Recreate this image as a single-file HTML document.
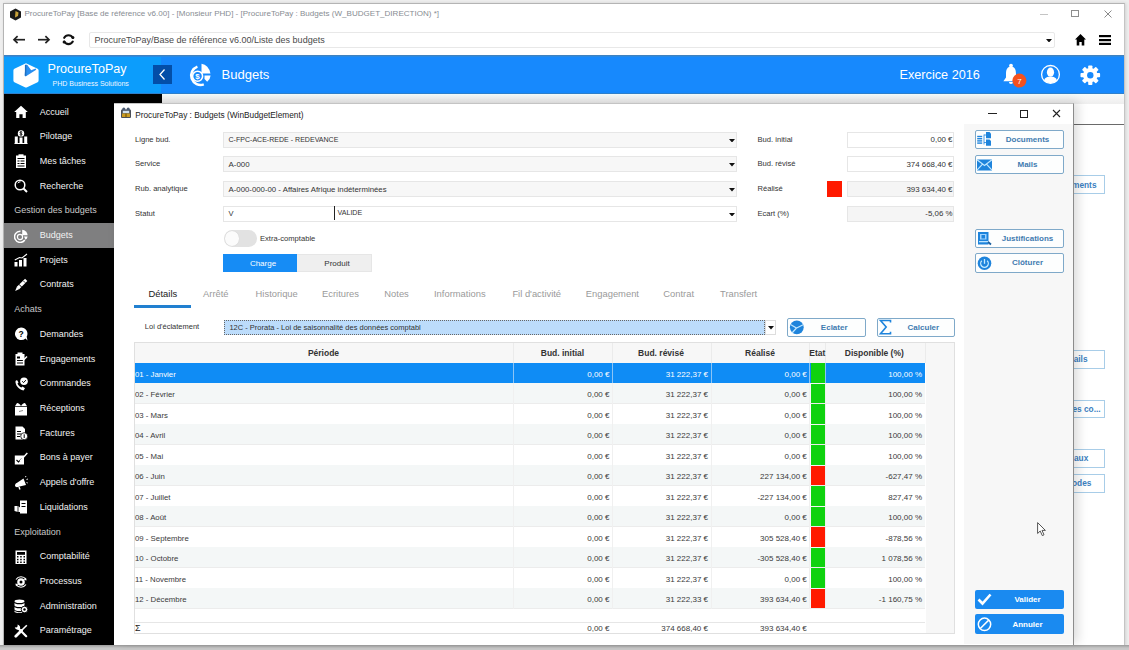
<!DOCTYPE html><html><head><meta charset="utf-8"><style>
html,body{margin:0;padding:0;}
body{width:1129px;height:650px;position:relative;overflow:hidden;background:#eeeeee;font-family:"Liberation Sans",sans-serif;}
div{box-sizing:border-box;}
</style></head><body>
<div style="position:absolute;left:3px;top:3px;width:1122px;height:643px;background:#fff;border:1px solid #b4b4b4;border-right-color:#c4c4c4;box-shadow:1px 0 3px rgba(0,0,0,0.12);"></div>
<div style="position:absolute;left:0px;top:645px;width:1129px;height:5px;background:linear-gradient(#9c9c9c,#c6c6c6 60%,#cacaca);"></div>
<svg style="position:absolute;left:9px;top:8px;" width="13" height="13" viewBox="0 0 13 13"><path d="M6.5 0.5 L12 3.5 L12 9.5 L6.5 12.5 L1 9.5 L1 3.5 Z" fill="#1a1a1a"/><path d="M6.5 3 L9.5 4.5 L9 8 L6 9.5 Z" fill="#c9a23a"/></svg>
<div style="position:absolute;left:24.5px;top:9.975px;font-size:8.05px;line-height:8.05px;color:#888d93;font-weight:normal;white-space:pre;">ProcureToPay [Base de référence v6.00] - [Monsieur PHD] - [ProcureToPay : Budgets (W_BUDGET_DIRECTION) *]</div>
<div style="position:absolute;left:1040px;top:13.5px;width:7.5px;height:1px;background:#c4c4c4;"></div>
<div style="position:absolute;left:1071px;top:10px;width:8px;height:7px;border:1px solid #8e8e8e;"></div>
<svg style="position:absolute;left:1103.5px;top:9.5px;" width="8" height="8" viewBox="0 0 8 8"><path d="M0.5 0.5 L7.5 7.5 M7.5 0.5 L0.5 7.5" stroke="#8a8a8a" stroke-width="1"/></svg>
<svg style="position:absolute;left:12px;top:34px;" width="14" height="12" viewBox="0 0 14 12"><path d="M2.2 5.7 H13" stroke="#222" stroke-width="1.7" fill="none"/><path d="M5.6 2.2 L2 5.7 L5.6 9.2" stroke="#222" stroke-width="1.7" fill="none"/></svg>
<svg style="position:absolute;left:37px;top:34px;" width="14" height="12" viewBox="0 0 14 12"><path d="M1 5.7 H11.8" stroke="#222" stroke-width="1.7" fill="none"/><path d="M8.4 2.2 L12 5.7 L8.4 9.2" stroke="#222" stroke-width="1.7" fill="none"/></svg>
<svg style="position:absolute;left:62px;top:33px;" width="13" height="13" viewBox="0 0 13 13"><path d="M2.2 4.8 A4.9 4.9 0 0 1 10.8 4.8" stroke="#111" stroke-width="2.1" fill="none" stroke-linecap="round"/><path d="M10.8 8.6 A4.9 4.9 0 0 1 2.2 8.6" stroke="#111" stroke-width="2.1" fill="none" stroke-linecap="round"/><circle cx="10.9" cy="4.4" r="1.5" fill="#111"/><circle cx="2.1" cy="9" r="1.5" fill="#111"/></svg>
<div style="position:absolute;left:88.5px;top:31.5px;width:966px;height:16px;border:1px solid #e8e8e8;border-radius:2px;background:#fff;"></div>
<div style="position:absolute;left:94.5px;top:35.5px;font-size:9px;line-height:9px;color:#4a4a4a;font-weight:normal;white-space:pre;">ProcureToPay/Base de référence v6.00/Liste des budgets</div>
<svg style="position:absolute;left:1045.5px;top:38.5px;" width="6" height="3.5" viewBox="0 0 6 3.5"><path d="M0 0 H6 L3 3.5 Z" fill="#111"/></svg>
<svg style="position:absolute;left:1075px;top:34px;" width="11" height="11.5" viewBox="0 0 11 11.5"><path d="M5.5 0 L11 5.5 L9.3 5.5 L9.3 11.5 L6.7 11.5 L6.7 8 L4.3 8 L4.3 11.5 L1.7 11.5 L1.7 5.5 L0 5.5 Z" fill="#000"/></svg>
<svg style="position:absolute;left:1099px;top:35px;" width="12" height="10" viewBox="0 0 12 10"><rect x="0" y="0" width="12" height="2.2" fill="#000"/><rect x="0" y="4" width="12" height="2.2" fill="#000"/><rect x="0" y="7.8" width="12" height="2.2" fill="#000"/></svg>
<div style="position:absolute;left:4px;top:55px;width:1120px;height:38.5px;background:#1789fd;"></div>
<div style="position:absolute;left:4px;top:55px;width:157px;height:38.5px;background:#0c9dfc;"></div>
<div style="position:absolute;left:4px;top:55px;width:1120px;height:1px;background:#3f82c0;"></div>
<div style="position:absolute;left:4px;top:56px;width:1120px;height:1px;background:#2b8ae2;"></div>
<div style="position:absolute;left:4px;top:92.5px;width:1120px;height:1px;background:#2f80cc;"></div>
<svg style="position:absolute;left:13px;top:62px;" width="27" height="26" viewBox="0 0 27 26"><path d="M13 1.2 L24.6 6.8 Q25.6 7.3 25.6 8.4 L25.6 18.6 Q25.6 19.7 24.6 20.2 L13.6 25.4 Q13 25.7 12.4 25.4 L1.4 20.2 Q0.4 19.7 0.4 18.6 L0.4 8.4 Q0.4 7.3 1.4 6.8 Z" fill="#fff"/><path d="M12.6 2.8 L14.2 2.8 L18.2 8.2 L22.6 6.6 L23.2 7.8 L12.6 14.6 L11.6 13.6 Z" fill="#2a8ff0"/><path d="M12.6 2.8 L12.6 13.8" stroke="#1f6fc0" stroke-width="1.4"/></svg>
<div style="position:absolute;left:47.5px;top:63.2px;font-size:12.6px;line-height:12.6px;color:#fff;font-weight:normal;white-space:pre;">ProcureToPay</div>
<div style="position:absolute;left:52.5px;top:80.475px;font-size:7.05px;line-height:7.05px;color:#f0f6ff;font-weight:normal;white-space:pre;">PHD Business Solutions</div>
<div style="position:absolute;left:153px;top:65px;width:19px;height:19px;background:#034ea8;"></div>
<svg style="position:absolute;left:153px;top:65px;" width="19" height="19" viewBox="0 0 19 19"><path d="M11.5 4.5 L7 9.5 L11.5 14.5" stroke="#fff" stroke-width="1.3" fill="none"/></svg>
<svg style="position:absolute;left:186px;top:62px;" width="27" height="27" viewBox="0 0 27 27"><path d="M11.4 4.6 A9.4 9.4 0 1 0 17.8 22.4" stroke="#fff" stroke-width="2.5" fill="none"/><circle cx="11.6" cy="14.2" r="5" stroke="#fff" stroke-width="1.6" fill="none"/><text x="11.6" y="17.3" font-size="8" font-weight="bold" fill="#fff" text-anchor="middle" font-family="Liberation Sans">$</text><path d="M15.5 1.8 Q22.5 3 24.5 11.5 L15.5 11.5 Z" fill="#fff"/><path d="M18.5 13.4 L24.6 13.4 Q24.2 17.5 21.2 19.8 L18.5 17 Z" fill="#fff"/></svg>
<div style="position:absolute;left:221.5px;top:68.475px;font-size:13.05px;line-height:13.05px;color:#fff;font-weight:normal;white-space:pre;">Budgets</div>
<div style="position:absolute;left:899.5px;top:68.65px;font-size:12.7px;line-height:12.7px;color:#fff;font-weight:normal;white-space:pre;">Exercice 2016</div>
<svg style="position:absolute;left:1000px;top:62px;" width="30" height="28" viewBox="0 0 30 28"><circle cx="11" cy="3.6" r="1.9" fill="#fff"/><path d="M11 4.5 C6.8 4.5 6 8.5 6 12 L6 15.5 L3.4 19.2 L18.6 19.2 L16 15.5 L16 12 C16 8.5 15.2 4.5 11 4.5 Z" fill="#fff"/><path d="M9 20 A2 2 0 0 0 13 20 Z" fill="#fff"/><circle cx="19.4" cy="18.6" r="7" fill="#f4511e"/><text x="19.6" y="21.6" font-size="8" fill="#fff" text-anchor="middle" font-family="Liberation Sans">7</text></svg>
<svg style="position:absolute;left:1040px;top:64px;" width="22" height="22" viewBox="0 0 22 22"><circle cx="10.5" cy="10.4" r="8.9" stroke="#fff" stroke-width="1.3" fill="none"/><ellipse cx="10.5" cy="8.2" rx="3.6" ry="4.6" fill="#fff"/><path d="M4.2 16.8 C4.6 13.2 7.5 12.8 10.5 12.8 C13.5 12.8 16.4 13.2 16.8 16.8 Q10.5 21.5 4.2 16.8 Z" fill="#fff"/></svg>
<svg style="position:absolute;left:1079px;top:63.5px;" width="22" height="22" viewBox="0 0 22 22"><circle cx="11.3" cy="11.2" r="7.3" fill="#fff"/><rect x="9.2" y="1.4" width="4.2" height="4" rx="0.8" fill="#fff" transform="rotate(0 11.3 11.2)"/><rect x="9.2" y="1.4" width="4.2" height="4" rx="0.8" fill="#fff" transform="rotate(45 11.3 11.2)"/><rect x="9.2" y="1.4" width="4.2" height="4" rx="0.8" fill="#fff" transform="rotate(90 11.3 11.2)"/><rect x="9.2" y="1.4" width="4.2" height="4" rx="0.8" fill="#fff" transform="rotate(135 11.3 11.2)"/><rect x="9.2" y="1.4" width="4.2" height="4" rx="0.8" fill="#fff" transform="rotate(180 11.3 11.2)"/><rect x="9.2" y="1.4" width="4.2" height="4" rx="0.8" fill="#fff" transform="rotate(225 11.3 11.2)"/><rect x="9.2" y="1.4" width="4.2" height="4" rx="0.8" fill="#fff" transform="rotate(270 11.3 11.2)"/><rect x="9.2" y="1.4" width="4.2" height="4" rx="0.8" fill="#fff" transform="rotate(315 11.3 11.2)"/><circle cx="11.3" cy="11.2" r="3.2" fill="#1789fd"/></svg>
<div style="position:absolute;left:162px;top:93.5px;width:962px;height:551px;background:#fff;"></div>
<div style="position:absolute;left:162px;top:93.5px;width:962px;height:10px;background:linear-gradient(#f4fcfc,#f5f5f5 40%,#eeeeee);"></div>
<div style="position:absolute;left:1073px;top:124px;width:51px;height:1.2px;background:#6a6a6a;"></div>
<div style="position:absolute;left:1060px;top:175px;width:45px;height:19px;border:1px solid #a8cde8;background:#fff;"></div>
<div style="position:absolute;left:696.5px;width:400px;text-align:right;top:180.85px;font-size:8.3px;line-height:8.3px;color:#3b80c0;font-weight:bold;white-space:pre;">ments</div>
<div style="position:absolute;left:1060px;top:349.5px;width:45px;height:19.0px;border:1px solid #a8cde8;background:#fff;"></div>
<div style="position:absolute;left:687.5px;width:400px;text-align:right;top:355.35px;font-size:8.3px;line-height:8.3px;color:#3b80c0;font-weight:bold;white-space:pre;">ails</div>
<div style="position:absolute;left:1060px;top:399.5px;width:45px;height:18.5px;border:1px solid #a8cde8;background:#fff;"></div>
<div style="position:absolute;left:700.5999999999999px;width:400px;text-align:right;top:405.1px;font-size:8.3px;line-height:8.3px;color:#3b80c0;font-weight:bold;white-space:pre;">es co...</div>
<div style="position:absolute;left:1060px;top:448.5px;width:45px;height:19.0px;border:1px solid #a8cde8;background:#fff;"></div>
<div style="position:absolute;left:688.3px;width:400px;text-align:right;top:454.35px;font-size:8.3px;line-height:8.3px;color:#3b80c0;font-weight:bold;white-space:pre;">aux</div>
<div style="position:absolute;left:1060px;top:473.5px;width:45px;height:19.0px;border:1px solid #a8cde8;background:#fff;"></div>
<div style="position:absolute;left:691.4000000000001px;width:400px;text-align:right;top:479.35px;font-size:8.3px;line-height:8.3px;color:#3b80c0;font-weight:bold;white-space:pre;">odes</div>
<div style="position:absolute;left:4px;top:93.5px;width:158px;height:551px;background:#000;"></div>
<div style="position:absolute;left:4px;top:222.5px;width:158px;height:25.2px;background:#7f7f80;"></div>
<div style="position:absolute;left:39.7px;top:107.5px;font-size:9px;line-height:9px;color:#f2f2f2;font-weight:normal;white-space:pre;">Accueil</div>
<svg style="position:absolute;left:14px;top:105.0px;" width="14" height="14" viewBox="0 0 14 14"><path d="M7 0.8 L13.8 7 L11.8 7 L11.8 13 L8.6 13 L8.6 9.2 L5.4 9.2 L5.4 13 L2.2 13 L2.2 7 L0.2 7 Z" fill="#fff"/></svg>
<div style="position:absolute;left:39.7px;top:132.21px;font-size:9px;line-height:9px;color:#f2f2f2;font-weight:normal;white-space:pre;">Pilotage</div>
<svg style="position:absolute;left:14px;top:129.7px;" width="14" height="14" viewBox="0 0 14 14"><circle cx="7" cy="3.4" r="3.2" fill="#fff"/><path d="M8.3 2.2 Q7 1.3 6 2 Q5.3 2.8 7 3.4 Q8.7 4 8 4.8 Q7 5.5 5.7 4.6 M7 1.2 V5.7" stroke="#000" stroke-width="0.8" fill="none"/><rect x="0.8" y="6.5" width="3" height="7" fill="#fff"/><rect x="5.5" y="7.5" width="3" height="6" fill="#fff"/><rect x="10.2" y="6.5" width="3" height="7" fill="#fff"/><rect x="0.5" y="13" width="13" height="1" fill="#fff"/></svg>
<div style="position:absolute;left:39.7px;top:156.92000000000002px;font-size:9px;line-height:9px;color:#f2f2f2;font-weight:normal;white-space:pre;">Mes tâches</div>
<svg style="position:absolute;left:14px;top:154.4px;" width="14" height="14" viewBox="0 0 14 14"><rect x="2" y="1.5" width="10" height="12.5" fill="#fff"/><rect x="4.5" y="0.3" width="5" height="2.2" fill="#fff"/><rect x="3.5" y="4" width="7" height="1" fill="#000"/><rect x="3.5" y="6.5" width="2" height="1" fill="#000"/><rect x="6.5" y="6.5" width="4" height="1" fill="#000"/><rect x="3.5" y="9" width="2" height="1" fill="#000"/><rect x="6.5" y="9" width="4" height="1" fill="#000"/><rect x="3.5" y="11.5" width="7" height="1" fill="#000"/></svg>
<div style="position:absolute;left:39.7px;top:181.63px;font-size:9px;line-height:9px;color:#f2f2f2;font-weight:normal;white-space:pre;">Recherche</div>
<svg style="position:absolute;left:14px;top:179.1px;" width="14" height="14" viewBox="0 0 14 14"><circle cx="6" cy="6" r="4.8" stroke="#fff" stroke-width="1.5" fill="none"/><path d="M9.5 9.5 L13 13" stroke="#fff" stroke-width="2"/><path d="M3.8 4.2 A3 3 0 0 1 6.5 2.8" stroke="#fff" stroke-width="1" fill="none"/></svg>
<div style="position:absolute;left:14.3px;top:206.34px;font-size:9px;line-height:9px;color:#c8c8c8;font-weight:normal;white-space:pre;">Gestion des budgets</div>
<div style="position:absolute;left:39.7px;top:231.05px;font-size:9px;line-height:9px;color:#f2f2f2;font-weight:normal;white-space:pre;">Budgets</div>
<svg style="position:absolute;left:14px;top:228.6px;" width="14" height="14" viewBox="0 0 14 14"><path d="M6.5 2.2 A5.6 5.6 0 1 0 10.8 11" stroke="#fff" stroke-width="1.5" fill="none"/><circle cx="6" cy="8" r="2.6" stroke="#fff" stroke-width="1.2" fill="none"/><path d="M8.2 0.8 A5.6 5.6 0 0 1 13.6 6.2 L8.2 6.2 Z" fill="#fff"/><path d="M10 7.4 L13.6 7.4 A5 5 0 0 1 11.5 10.8 Z" fill="#fff"/></svg>
<div style="position:absolute;left:39.7px;top:255.76px;font-size:9px;line-height:9px;color:#f2f2f2;font-weight:normal;white-space:pre;">Projets</div>
<svg style="position:absolute;left:14px;top:253.3px;" width="14" height="14" viewBox="0 0 14 14"><rect x="0.5" y="9" width="3" height="4.5" fill="#fff"/><rect x="5" y="7" width="3" height="6.5" fill="#fff"/><rect x="9.5" y="5" width="3" height="8.5" fill="#fff"/><path d="M0.8 7 L5.5 4.5 L8 5 L13 1" stroke="#fff" stroke-width="1.1" fill="none"/></svg>
<div style="position:absolute;left:39.7px;top:280.47px;font-size:9px;line-height:9px;color:#f2f2f2;font-weight:normal;white-space:pre;">Contrats</div>
<svg style="position:absolute;left:14px;top:278.0px;" width="14" height="14" viewBox="0 0 14 14"><path d="M4 10 L12.2 1.8" stroke="#fff" stroke-width="3.2"/><path d="M4.8 6.2 L7.8 9.2" stroke="#000" stroke-width="1"/><path d="M3 8.6 L5.4 11 L1.2 13 Z" fill="#fff"/><path d="M9.5 3 L11.2 4.7" stroke="#000" stroke-width="0.8"/></svg>
<div style="position:absolute;left:14.3px;top:305.18px;font-size:9px;line-height:9px;color:#c8c8c8;font-weight:normal;white-space:pre;">Achats</div>
<div style="position:absolute;left:39.7px;top:329.89px;font-size:9px;line-height:9px;color:#f2f2f2;font-weight:normal;white-space:pre;">Demandes</div>
<svg style="position:absolute;left:14px;top:327.4px;" width="14" height="14" viewBox="0 0 14 14"><path d="M7 0.5 A6.3 6.3 0 1 0 11.5 11.5 L13.5 13.5 L12.7 9.8 A6.3 6.3 0 0 0 7 0.5 Z" fill="#fff"/><text x="7" y="10.3" font-size="8.5" font-weight="bold" fill="#000" text-anchor="middle" font-family="Liberation Sans">?</text></svg>
<div style="position:absolute;left:39.7px;top:354.6px;font-size:9px;line-height:9px;color:#f2f2f2;font-weight:normal;white-space:pre;">Engagements</div>
<svg style="position:absolute;left:14px;top:352.1px;" width="14" height="14" viewBox="0 0 14 14"><rect x="1.5" y="2" width="9" height="11.5" fill="#fff"/><rect x="3.5" y="0.5" width="5" height="2.5" fill="#fff"/><rect x="3" y="4.5" width="3" height="2" fill="#000"/><rect x="3" y="8" width="6" height="1" fill="#000"/><rect x="3" y="10.5" width="6" height="1" fill="#000"/><path d="M9.5 9 L13.5 5 L12.5 4 L8.5 8 Z" fill="#fff"/></svg>
<div style="position:absolute;left:39.7px;top:379.31px;font-size:9px;line-height:9px;color:#f2f2f2;font-weight:normal;white-space:pre;">Commandes</div>
<svg style="position:absolute;left:14px;top:376.8px;" width="14" height="14" viewBox="0 0 14 14"><path d="M1.5 4 C1 8 5 13 9.5 13.5 L11 11.2 L8.5 9.5 L7.5 10.5 C6 10 4 8 3.5 6.5 L4.5 5.5 L3 3 Z" fill="#fff"/><circle cx="10" cy="4.2" r="3.8" fill="#fff"/><path d="M8.2 4.3 L9.6 5.6 L11.8 3.2" stroke="#000" stroke-width="1" fill="none"/></svg>
<div style="position:absolute;left:39.7px;top:404.02px;font-size:9px;line-height:9px;color:#f2f2f2;font-weight:normal;white-space:pre;">Réceptions</div>
<svg style="position:absolute;left:14px;top:401.5px;" width="14" height="14" viewBox="0 0 14 14"><rect x="1" y="5" width="12" height="8.5" fill="#fff"/><path d="M3 1 C4.5 1 6.5 2.5 7 4.3 L1 4.3 Z" fill="#fff"/><path d="M11 1 C9.5 1 7.5 2.5 7 4.3 L13 4.3 Z" fill="#fff"/><path d="M5 9.5 L9 8.5" stroke="#888" stroke-width="1"/></svg>
<div style="position:absolute;left:39.7px;top:428.73px;font-size:9px;line-height:9px;color:#f2f2f2;font-weight:normal;white-space:pre;">Factures</div>
<svg style="position:absolute;left:14px;top:426.2px;" width="14" height="14" viewBox="0 0 14 14"><path d="M1.5 0.5 L8.5 0.5 L11 3 L11 13.5 L1.5 13.5 Z" fill="#fff"/><rect x="3" y="5" width="4" height="1" fill="#000"/><rect x="3" y="7.5" width="4" height="1" fill="#000"/><rect x="3" y="10" width="3" height="1" fill="#000"/><circle cx="10.2" cy="10.2" r="3.5" fill="#fff" stroke="#000" stroke-width="0.8"/><path d="M10.2 8.3 L10.2 12" stroke="#000" stroke-width="1"/></svg>
<div style="position:absolute;left:39.7px;top:453.44px;font-size:9px;line-height:9px;color:#f2f2f2;font-weight:normal;white-space:pre;">Bons à payer</div>
<svg style="position:absolute;left:14px;top:450.9px;" width="14" height="14" viewBox="0 0 14 14"><rect x="0.8" y="4.5" width="9.2" height="9" fill="#fff"/><path d="M2.5 9 L4.5 11 L8 7.5" stroke="#000" stroke-width="1.1" fill="none"/><path d="M6 9 L12.8 1.5 L13.8 2.5 L7 10 L5.5 10.5 Z" fill="#fff"/></svg>
<div style="position:absolute;left:39.7px;top:478.15000000000003px;font-size:9px;line-height:9px;color:#f2f2f2;font-weight:normal;white-space:pre;">Appels d'offre</div>
<svg style="position:absolute;left:14px;top:475.7px;" width="14" height="14" viewBox="0 0 14 14"><path d="M2 7.5 L9.5 2.5 L12 9 L3.5 11 Z" fill="#fff"/><circle cx="3" cy="9.2" r="2" fill="#fff"/><path d="M5 11 L6 13.5" stroke="#fff" stroke-width="1.4"/><path d="M11 1 L12.5 0 M12.5 3.5 L14 3 M12.5 6.5 L13.8 7" stroke="#fff" stroke-width="0.9"/></svg>
<div style="position:absolute;left:39.7px;top:502.86px;font-size:9px;line-height:9px;color:#f2f2f2;font-weight:normal;white-space:pre;">Liquidations</div>
<svg style="position:absolute;left:14px;top:500.4px;" width="14" height="14" viewBox="0 0 14 14"><rect x="6" y="0.5" width="7" height="13" fill="#fff"/><rect x="7.5" y="3" width="4" height="1" fill="#000"/><rect x="7.5" y="6" width="4" height="1" fill="#000"/><path d="M0.5 6 L4 6 L7.5 8.5 L7.5 12 L4 12 L0.5 11 Z" fill="#fff"/><path d="M4 6 L4 12" stroke="#000" stroke-width="0.8"/></svg>
<div style="position:absolute;left:14.3px;top:527.5699999999999px;font-size:9px;line-height:9px;color:#c8c8c8;font-weight:normal;white-space:pre;">Exploitation</div>
<div style="position:absolute;left:39.7px;top:552.28px;font-size:9px;line-height:9px;color:#f2f2f2;font-weight:normal;white-space:pre;">Comptabilité</div>
<svg style="position:absolute;left:14px;top:549.8px;" width="14" height="14" viewBox="0 0 14 14"><rect x="1.5" y="0.5" width="11" height="13.5" fill="#fff"/><rect x="3" y="2" width="8" height="2.8" fill="#000"/><g fill="#000"><rect x="3" y="6" width="1.5" height="1.5"/><rect x="6.2" y="6" width="1.5" height="1.5"/><rect x="9.5" y="6" width="1.5" height="1.5"/><rect x="3" y="8.8" width="1.5" height="1.5"/><rect x="6.2" y="8.8" width="1.5" height="1.5"/><rect x="9.5" y="8.8" width="1.5" height="1.5"/><rect x="3" y="11.5" width="1.5" height="1.5"/><rect x="6.2" y="11.5" width="1.5" height="1.5"/><rect x="9.5" y="11.5" width="1.5" height="1.5"/></g></svg>
<div style="position:absolute;left:39.7px;top:576.99px;font-size:9px;line-height:9px;color:#f2f2f2;font-weight:normal;white-space:pre;">Processus</div>
<svg style="position:absolute;left:14px;top:574.5px;" width="14" height="14" viewBox="0 0 14 14"><path d="M2 4.5 A6 6 0 0 1 12 4.5" stroke="#fff" stroke-width="1.1" fill="none"/><path d="M12 9.5 A6 6 0 0 1 2 9.5" stroke="#fff" stroke-width="1.1" fill="none"/><circle cx="7" cy="7" r="3.8" fill="#fff"/><circle cx="7" cy="7" r="1.5" fill="#000"/><path d="M12 2.5 L12.5 5.5 L9.8 4.8 Z M2 11.5 L1.5 8.5 L4.2 9.2 Z" fill="#fff"/></svg>
<div style="position:absolute;left:39.7px;top:601.7px;font-size:9px;line-height:9px;color:#f2f2f2;font-weight:normal;white-space:pre;">Administration</div>
<svg style="position:absolute;left:14px;top:599.2px;" width="14" height="14" viewBox="0 0 14 14"><ellipse cx="5.5" cy="2.2" rx="5" ry="1.8" fill="#fff"/><path d="M0.5 3.5 A5 1.8 0 0 0 10.5 3.5 L10.5 6.2 A5 1.8 0 0 1 0.5 6.2 Z" fill="#fff"/><path d="M0.5 7.5 A5 1.8 0 0 0 10.5 7.5 L10.5 10.2 A5 1.8 0 0 1 0.5 10.2 Z" fill="#fff"/><path d="M0.5 11.5 A5 1.8 0 0 0 8 12.9 L8 13.8 A5 1.8 0 0 1 0.5 13 Z" fill="#fff"/><circle cx="10.5" cy="10.5" r="3.3" fill="#fff" stroke="#000" stroke-width="0.9"/><circle cx="10.5" cy="10.5" r="1.2" fill="#000"/></svg>
<div style="position:absolute;left:39.7px;top:626.41px;font-size:9px;line-height:9px;color:#f2f2f2;font-weight:normal;white-space:pre;">Paramétrage</div>
<svg style="position:absolute;left:14px;top:623.9px;" width="14" height="14" viewBox="0 0 14 14"><path d="M4 4 L12.2 12.2" stroke="#fff" stroke-width="2.2" stroke-linecap="round"/><path d="M0.8 3.2 A3.3 3.3 0 0 0 5.8 5.2 A3.3 3.3 0 0 0 3.6 0.5 L3.6 2.6 L2.4 3.6 Z" fill="#fff"/><path d="M12.8 1.2 L7 7" stroke="#fff" stroke-width="1.6"/><path d="M7.5 6.5 L1.8 12.2" stroke="#fff" stroke-width="2.8" stroke-linecap="round"/></svg>
<div style="position:absolute;left:114px;top:103px;width:960px;height:542px;background:#fff;border-top:1px solid #c4c4c4;border-right:1px solid #8c8c8c;box-shadow:4px -2px 10px rgba(0,0,0,0.14);"></div>
<svg style="position:absolute;left:119.5px;top:107px;" width="12" height="12" viewBox="0 0 12 12"><path d="M1 3.5 Q1 2.5 2 2.5 L10 2.5 Q11 2.5 11 3.5 L11 10 Q11 11 10 11 L2 11 Q1 11 1 10 Z" fill="#4a4f58"/><circle cx="3.8" cy="2.2" r="1.6" fill="#4a5a72"/><circle cx="8.2" cy="2.2" r="1.6" fill="#4a5a72"/><rect x="2.8" y="3.8" width="6.4" height="2.4" fill="#cfe0f0"/><path d="M2 6.5 L10 6.5 L10 10 L2 10 Z" fill="#c99a22"/><rect x="5.2" y="6.5" width="1.6" height="3.5" fill="#8a6a10"/></svg>
<div style="position:absolute;left:135.2px;top:110.64999999999999px;font-size:8.3px;line-height:8.3px;color:#222;font-weight:normal;white-space:pre;">ProcureToPay : Budgets (WinBudgetElement)</div>
<div style="position:absolute;left:988px;top:113px;width:8.5px;height:1.2px;background:#222;"></div>
<div style="position:absolute;left:1019.7px;top:110px;width:8.5px;height:7.5px;border:1px solid #222;border-bottom-width:1.5px;"></div>
<svg style="position:absolute;left:1052px;top:109px;" width="9" height="9" viewBox="0 0 9 9"><path d="M1 1 L8 8 M8 1 L1 8" stroke="#222" stroke-width="1.1"/></svg>
<div style="position:absolute;left:964px;top:124px;width:109px;height:520px;background:#f7f7f7;"></div>
<div style="position:absolute;left:974.5px;top:129.5px;width:89px;height:19.5px;background:#fdfefe;border:1px solid #7fa9c9;border-radius:2px;"></div>
<div style="position:absolute;left:827.5px;width:400px;text-align:center;top:135.75px;font-size:8px;line-height:8px;color:#3f7bb0;font-weight:bold;white-space:pre;">Documents</div>
<svg style="position:absolute;left:976px;top:131.0px;" width="18" height="16" viewBox="0 0 18 16"><g fill="#1e84dc"><rect x="1.2" y="4.8" width="5" height="1.4"/><rect x="1.2" y="7" width="5" height="1.4"/><rect x="1.2" y="9.2" width="5" height="1.4"/><rect x="1.2" y="11.4" width="5" height="1.4"/><path d="M10 1 L13.5 1 L15 2.5 L15 7.3 L10 7.3 Z"/><path d="M10 8.5 L13.5 8.5 L15 10 L15 14.8 L10 14.8 Z"/></g><path d="M8 3.5 L8 13.5 M8 4 L10 4 M8 11.5 L10 11.5" stroke="#1e84dc" stroke-width="0.8" fill="none"/></svg>
<div style="position:absolute;left:974.5px;top:154.5px;width:89px;height:19.5px;background:#fdfefe;border:1px solid #7fa9c9;border-radius:2px;"></div>
<div style="position:absolute;left:827.5px;width:400px;text-align:center;top:160.75px;font-size:8px;line-height:8px;color:#3f7bb0;font-weight:bold;white-space:pre;">Mails</div>
<svg style="position:absolute;left:976px;top:156.0px;" width="18" height="16" viewBox="0 0 18 16"><rect x="1" y="3.5" width="15" height="11" fill="#1e84dc"/><path d="M1 3.8 L8.5 9.5 L16 3.8 M1 14.2 L6.3 8.3 M16 14.2 L10.7 8.3" stroke="#bfe6ff" stroke-width="1.2" fill="none"/></svg>
<div style="position:absolute;left:974.5px;top:228.5px;width:89px;height:19.5px;background:#fdfefe;border:1px solid #7fa9c9;border-radius:2px;"></div>
<div style="position:absolute;left:827.5px;width:400px;text-align:center;top:234.75px;font-size:8px;line-height:8px;color:#3f7bb0;font-weight:bold;white-space:pre;">Justifications</div>
<svg style="position:absolute;left:976px;top:230.0px;" width="18" height="16" viewBox="0 0 18 16"><rect x="2" y="2" width="10.5" height="12.5" fill="#1e84dc"/><rect x="4" y="4" width="6.5" height="5.5" fill="#9fd3ff"/><rect x="5.5" y="5" width="3.5" height="3.5" fill="#1e84dc"/><rect x="3" y="11" width="9" height="1.3" fill="#bfe6ff"/><path d="M12 12 L15 14.5" stroke="#1a5fa0" stroke-width="1.8"/></svg>
<div style="position:absolute;left:974.5px;top:253px;width:89px;height:19.5px;background:#fdfefe;border:1px solid #7fa9c9;border-radius:2px;"></div>
<div style="position:absolute;left:827.5px;width:400px;text-align:center;top:259.25px;font-size:8px;line-height:8px;color:#3f7bb0;font-weight:bold;white-space:pre;">Clôturer</div>
<svg style="position:absolute;left:976px;top:254.5px;" width="18" height="16" viewBox="0 0 18 16"><circle cx="8.5" cy="8.3" r="6.8" fill="#1e84dc"/><path d="M5.8 5.8 A3.8 3.8 0 1 0 11.2 5.8" stroke="#c8ecff" stroke-width="1.3" fill="none"/><path d="M8.5 4 L8.5 8.8" stroke="#c8ecff" stroke-width="1.3"/></svg>
<div style="position:absolute;left:974.5px;top:589.5px;width:89px;height:19.0px;background:#1a8af0;border-radius:2px;"></div>
<div style="position:absolute;left:827.5px;width:400px;text-align:center;top:596.0px;font-size:8px;line-height:8px;color:#fff;font-weight:bold;white-space:pre;">Valider</div>
<svg style="position:absolute;left:976px;top:591.0px;" width="18" height="16" viewBox="0 0 18 16"><path d="M2.5 8.5 L6.5 12.5 L14.5 3.5" stroke="#fff" stroke-width="2.6" fill="none"/></svg>
<div style="position:absolute;left:974.5px;top:614px;width:89px;height:19.5px;background:#1a8af0;border-radius:2px;"></div>
<div style="position:absolute;left:827.5px;width:400px;text-align:center;top:620.75px;font-size:8px;line-height:8px;color:#fff;font-weight:bold;white-space:pre;">Annuler</div>
<svg style="position:absolute;left:976px;top:615.5px;" width="18" height="16" viewBox="0 0 18 16"><circle cx="8.5" cy="8.3" r="6.2" stroke="#fff" stroke-width="1.5" fill="none"/><path d="M4.3 12.5 L12.7 4.1" stroke="#fff" stroke-width="1.5"/></svg>
<div style="position:absolute;left:135px;top:135.7px;font-size:7.6px;line-height:7.6px;color:#333;font-weight:normal;white-space:pre;">Ligne bud.</div>
<div style="position:absolute;left:223px;top:131.5px;width:514px;height:16px;background:#f7f7f7;border:1px solid #e6e6e6;"></div>
<div style="position:absolute;left:228.5px;top:136.475px;font-size:7.05px;line-height:7.05px;color:#333;font-weight:normal;white-space:pre;">C-FPC-ACE-REDE - REDEVANCE</div>
<svg style="position:absolute;left:729px;top:138.5px;" width="6" height="3.5" viewBox="0 0 6 3.5"><path d="M0 0 H6 L3 3.5 Z" fill="#111"/></svg>
<div style="position:absolute;left:135px;top:160.2px;font-size:7.6px;line-height:7.6px;color:#333;font-weight:normal;white-space:pre;">Service</div>
<div style="position:absolute;left:223px;top:156px;width:514px;height:16px;background:#f7f7f7;border:1px solid #e6e6e6;"></div>
<div style="position:absolute;left:228.5px;top:160.55px;font-size:7.9px;line-height:7.9px;color:#333;font-weight:normal;white-space:pre;">A-000</div>
<svg style="position:absolute;left:729px;top:163px;" width="6" height="3.5" viewBox="0 0 6 3.5"><path d="M0 0 H6 L3 3.5 Z" fill="#111"/></svg>
<div style="position:absolute;left:135px;top:185.2px;font-size:7.6px;line-height:7.6px;color:#333;font-weight:normal;white-space:pre;">Rub. analytique</div>
<div style="position:absolute;left:223px;top:181px;width:514px;height:16px;background:#f7f7f7;border:1px solid #e6e6e6;"></div>
<div style="position:absolute;left:228.5px;top:185.6px;font-size:7.8px;line-height:7.8px;color:#333;font-weight:normal;white-space:pre;">A-000-000-00 - Affaires Afrique indéterminées</div>
<svg style="position:absolute;left:729px;top:188px;" width="6" height="3.5" viewBox="0 0 6 3.5"><path d="M0 0 H6 L3 3.5 Z" fill="#111"/></svg>
<div style="position:absolute;left:135px;top:209.7px;font-size:7.6px;line-height:7.6px;color:#333;font-weight:normal;white-space:pre;">Statut</div>
<div style="position:absolute;left:223px;top:205.5px;width:514px;height:16px;background:#fff;border:1px solid #e6e6e6;"></div>
<div style="position:absolute;left:228.5px;top:210.25px;font-size:7.5px;line-height:7.5px;color:#333;font-weight:normal;white-space:pre;">V</div>
<svg style="position:absolute;left:729px;top:212.5px;" width="6" height="3.5" viewBox="0 0 6 3.5"><path d="M0 0 H6 L3 3.5 Z" fill="#111"/></svg>
<div style="position:absolute;left:334px;top:206px;width:1px;height:14px;background:#222;"></div>
<div style="position:absolute;left:337.5px;top:210.45px;font-size:7.1px;line-height:7.1px;color:#333;font-weight:normal;white-space:pre;">VALIDE</div>
<div style="position:absolute;left:757.5px;top:135.7px;font-size:7.6px;line-height:7.6px;color:#333;font-weight:normal;white-space:pre;">Bud. initial</div>
<div style="position:absolute;left:846.5px;top:131.5px;width:107.5px;height:16px;background:#fff;border:1px solid #e6e6e6;"></div>
<div style="position:absolute;left:552.5px;width:400px;text-align:right;top:136.05px;font-size:7.9px;line-height:7.9px;color:#333;font-weight:normal;white-space:pre;">0,00 €</div>
<div style="position:absolute;left:757.5px;top:160.2px;font-size:7.6px;line-height:7.6px;color:#333;font-weight:normal;white-space:pre;">Bud. révisé</div>
<div style="position:absolute;left:846.5px;top:156px;width:107.5px;height:16px;background:#fff;border:1px solid #e6e6e6;"></div>
<div style="position:absolute;left:552.5px;width:400px;text-align:right;top:160.55px;font-size:7.9px;line-height:7.9px;color:#333;font-weight:normal;white-space:pre;">374 668,40 €</div>
<div style="position:absolute;left:757.5px;top:185.2px;font-size:7.6px;line-height:7.6px;color:#333;font-weight:normal;white-space:pre;">Réalisé</div>
<div style="position:absolute;left:846.5px;top:181px;width:107.5px;height:16px;background:#f5f5f5;border:1px solid #e6e6e6;"></div>
<div style="position:absolute;left:552.5px;width:400px;text-align:right;top:185.55px;font-size:7.9px;line-height:7.9px;color:#333;font-weight:normal;white-space:pre;">393 634,40 €</div>
<div style="position:absolute;left:757.5px;top:209.7px;font-size:7.6px;line-height:7.6px;color:#333;font-weight:normal;white-space:pre;">Ecart (%)</div>
<div style="position:absolute;left:846.5px;top:205.5px;width:107.5px;height:16px;background:#f5f5f5;border:1px solid #e6e6e6;"></div>
<div style="position:absolute;left:552.5px;width:400px;text-align:right;top:210.05px;font-size:7.9px;line-height:7.9px;color:#333;font-weight:normal;white-space:pre;">-5,06 %</div>
<div style="position:absolute;left:827px;top:181px;width:15px;height:15.5px;background:#ff1a00;"></div>
<div style="position:absolute;left:223.5px;top:230px;width:33px;height:16.5px;background:#e2e2e2;border-radius:8.25px;"></div>
<div style="position:absolute;left:224.5px;top:231px;width:14.5px;height:14.5px;background:#fbfbfb;border-radius:50%;box-shadow:0 0 1px rgba(0,0,0,0.15);"></div>
<div style="position:absolute;left:260px;top:234.7px;font-size:7.6px;line-height:7.6px;color:#333;font-weight:normal;white-space:pre;">Extra-comptable</div>
<div style="position:absolute;left:223px;top:253.5px;width:74px;height:18.5px;background:#168cf5;"></div>
<div style="position:absolute;left:63px;width:400px;text-align:center;top:259.5px;font-size:8px;line-height:8px;color:#fff;font-weight:normal;white-space:pre;">Charge</div>
<div style="position:absolute;left:297px;top:253.5px;width:74.5px;height:18.5px;background:#efefef;border:1px solid #e6e6e6;border-left:none;"></div>
<div style="position:absolute;left:137px;width:400px;text-align:center;top:259.5px;font-size:8px;line-height:8px;color:#333;font-weight:normal;white-space:pre;">Produit</div>
<div style="position:absolute;left:148.5px;top:288.8px;font-size:9.4px;line-height:9.4px;color:#1a1a1a;font-weight:normal;white-space:pre;">Détails</div>
<div style="position:absolute;left:203px;top:288.8px;font-size:9.4px;line-height:9.4px;color:#9a9a9a;font-weight:normal;white-space:pre;">Arrêté</div>
<div style="position:absolute;left:255.6px;top:288.8px;font-size:9.4px;line-height:9.4px;color:#9a9a9a;font-weight:normal;white-space:pre;">Historique</div>
<div style="position:absolute;left:322px;top:288.8px;font-size:9.4px;line-height:9.4px;color:#9a9a9a;font-weight:normal;white-space:pre;">Ecritures</div>
<div style="position:absolute;left:384.3px;top:288.8px;font-size:9.4px;line-height:9.4px;color:#9a9a9a;font-weight:normal;white-space:pre;">Notes</div>
<div style="position:absolute;left:434px;top:288.8px;font-size:9.4px;line-height:9.4px;color:#9a9a9a;font-weight:normal;white-space:pre;">Informations</div>
<div style="position:absolute;left:512.4px;top:288.8px;font-size:9.4px;line-height:9.4px;color:#9a9a9a;font-weight:normal;white-space:pre;">Fil d'activité</div>
<div style="position:absolute;left:585.8px;top:288.8px;font-size:9.4px;line-height:9.4px;color:#9a9a9a;font-weight:normal;white-space:pre;">Engagement</div>
<div style="position:absolute;left:663.3px;top:288.8px;font-size:9.4px;line-height:9.4px;color:#9a9a9a;font-weight:normal;white-space:pre;">Contrat</div>
<div style="position:absolute;left:720px;top:288.8px;font-size:9.4px;line-height:9.4px;color:#9a9a9a;font-weight:normal;white-space:pre;">Transfert</div>
<div style="position:absolute;left:134.3px;top:305px;width:56.5px;height:2.6px;background:#2180d0;"></div>
<div style="position:absolute;left:144.8px;top:323.25px;font-size:7.5px;line-height:7.5px;color:#333;font-weight:normal;white-space:pre;">Loi d'éclatement</div>
<div style="position:absolute;left:224px;top:320px;width:541px;height:15px;background:#bcdcfb;border:1px dotted #666;"></div>
<div style="position:absolute;left:229.4px;top:323.75px;font-size:7.5px;line-height:7.5px;color:#333;font-weight:normal;white-space:pre;">12C - Prorata - Loi de saisonnalité des données comptabl</div>
<div style="position:absolute;left:765px;top:320px;width:11px;height:15px;background:#fff;border:1px solid #ddd;"></div>
<svg style="position:absolute;left:767.5px;top:326px;" width="6" height="3.5" viewBox="0 0 6 3.5"><path d="M0 0 H6 L3 3.5 Z" fill="#111"/></svg>
<div style="position:absolute;left:787px;top:317.5px;width:78.5px;height:19px;background:#fdfefe;border:1px solid #7fa9c9;border-radius:2px;"></div>
<div style="position:absolute;left:634.2px;width:400px;text-align:center;top:323.5px;font-size:8px;line-height:8px;color:#3f7bb0;font-weight:bold;white-space:pre;">Eclater</div>
<svg style="position:absolute;left:789px;top:319px;" width="16" height="16" viewBox="0 0 16 16"><circle cx="7.8" cy="8.3" r="6.9" fill="#1e84dc"/><path d="M1.5 5.5 L7.5 9 L14.2 5.8 M7.5 9 L3 14" stroke="#bfe6ff" stroke-width="1.2" fill="none"/></svg>
<div style="position:absolute;left:876.5px;top:317.5px;width:78px;height:19px;background:#fdfefe;border:1px solid #7fa9c9;border-radius:2px;"></div>
<div style="position:absolute;left:723.4px;width:400px;text-align:center;top:323.5px;font-size:8px;line-height:8px;color:#3f7bb0;font-weight:bold;white-space:pre;">Calculer</div>
<svg style="position:absolute;left:878px;top:319px;" width="16" height="16" viewBox="0 0 16 16"><path d="M12.5 3.5 L12.5 1.5 L2.5 1.5 L8.2 8 L2.5 14.8 L12.5 14.8 L12.5 12.8" stroke="#1e84dc" stroke-width="1.6" fill="none"/></svg>
<div style="position:absolute;left:134px;top:342px;width:821px;height:292px;background:#fff;border:1px solid #e0e0e0;"></div>
<div style="position:absolute;left:926px;top:343px;width:28px;height:290px;background:#f7f7f7;"></div>
<div style="position:absolute;left:135px;top:343px;width:819px;height:19.5px;background:#f7f7f7;"></div>
<div style="position:absolute;left:513.3px;top:343px;width:1px;height:19.5px;background:#ebebeb;"></div>
<div style="position:absolute;left:611.7px;top:343px;width:1px;height:19.5px;background:#ebebeb;"></div>
<div style="position:absolute;left:710.5px;top:343px;width:1px;height:19.5px;background:#ebebeb;"></div>
<div style="position:absolute;left:809.2px;top:343px;width:1px;height:19.5px;background:#ebebeb;"></div>
<div style="position:absolute;left:825.3px;top:343px;width:1px;height:19.5px;background:#ebebeb;"></div>
<div style="position:absolute;left:925px;top:343px;width:1px;height:19.5px;background:#ebebeb;"></div>
<div style="position:absolute;left:123.5px;width:400px;text-align:center;top:349.05px;font-size:8.5px;line-height:8.5px;color:#333;font-weight:bold;white-space:pre;">Période</div>
<div style="position:absolute;left:362.5px;width:400px;text-align:center;top:349.05px;font-size:8.5px;line-height:8.5px;color:#333;font-weight:bold;white-space:pre;">Bud. initial</div>
<div style="position:absolute;left:461px;width:400px;text-align:center;top:349.05px;font-size:8.5px;line-height:8.5px;color:#333;font-weight:bold;white-space:pre;">Bud. révisé</div>
<div style="position:absolute;left:560px;width:400px;text-align:center;top:349.05px;font-size:8.5px;line-height:8.5px;color:#333;font-weight:bold;white-space:pre;">Réalisé</div>
<div style="position:absolute;left:809.3px;top:349.05px;font-size:8.5px;line-height:8.5px;color:#333;font-weight:bold;white-space:pre;">Etat</div>
<div style="position:absolute;left:674.3px;width:400px;text-align:center;top:349.05px;font-size:8.5px;line-height:8.5px;color:#333;font-weight:bold;white-space:pre;">Disponible (%)</div>
<div style="position:absolute;left:135px;top:362.5px;width:790px;height:20.5px;background:#0f8cf5;"></div>
<div style="position:absolute;left:513.3px;top:362.5px;width:1px;height:20.5px;background:#8cc4f5;"></div>
<div style="position:absolute;left:611.7px;top:362.5px;width:1px;height:20.5px;background:#8cc4f5;"></div>
<div style="position:absolute;left:710.5px;top:362.5px;width:1px;height:20.5px;background:#8cc4f5;"></div>
<div style="position:absolute;left:809.2px;top:362.5px;width:1px;height:20.5px;background:#8cc4f5;"></div>
<div style="position:absolute;left:825.3px;top:362.5px;width:1px;height:20.5px;background:#8cc4f5;"></div>
<div style="position:absolute;left:135px;top:370.65000000000003px;font-size:7.8px;line-height:7.8px;color:#fff;font-weight:normal;white-space:pre;">01 - Janvier</div>
<div style="position:absolute;left:209.5px;width:400px;text-align:right;top:370.55px;font-size:8px;line-height:8px;color:#fff;font-weight:normal;white-space:pre;">0,00 €</div>
<div style="position:absolute;left:308px;width:400px;text-align:right;top:370.55px;font-size:8px;line-height:8px;color:#fff;font-weight:normal;white-space:pre;">31 222,37 €</div>
<div style="position:absolute;left:406.79999999999995px;width:400px;text-align:right;top:370.55px;font-size:8px;line-height:8px;color:#fff;font-weight:normal;white-space:pre;">0,00 €</div>
<div style="position:absolute;left:810.5px;top:363.0px;width:14px;height:19.5px;background:#0fd20f;"></div>
<div style="position:absolute;left:522px;width:400px;text-align:right;top:370.55px;font-size:8px;line-height:8px;color:#fff;font-weight:normal;white-space:pre;">100,00 %</div>
<div style="position:absolute;left:135px;top:383.0px;width:790px;height:20.5px;background:#f4f7f7;"></div>
<div style="position:absolute;left:135px;top:403.0px;width:790px;height:1px;background:#ececec;"></div>
<div style="position:absolute;left:513.3px;top:383.0px;width:1px;height:20.5px;background:#f0f0f0;"></div>
<div style="position:absolute;left:611.7px;top:383.0px;width:1px;height:20.5px;background:#f0f0f0;"></div>
<div style="position:absolute;left:710.5px;top:383.0px;width:1px;height:20.5px;background:#f0f0f0;"></div>
<div style="position:absolute;left:809.2px;top:383.0px;width:1px;height:20.5px;background:#f0f0f0;"></div>
<div style="position:absolute;left:825.3px;top:383.0px;width:1px;height:20.5px;background:#f0f0f0;"></div>
<div style="position:absolute;left:135px;top:391.15000000000003px;font-size:7.8px;line-height:7.8px;color:#3a3a3a;font-weight:normal;white-space:pre;">02 - Février</div>
<div style="position:absolute;left:209.5px;width:400px;text-align:right;top:391.05px;font-size:8px;line-height:8px;color:#3a3a3a;font-weight:normal;white-space:pre;">0,00 €</div>
<div style="position:absolute;left:308px;width:400px;text-align:right;top:391.05px;font-size:8px;line-height:8px;color:#3a3a3a;font-weight:normal;white-space:pre;">31 222,37 €</div>
<div style="position:absolute;left:406.79999999999995px;width:400px;text-align:right;top:391.05px;font-size:8px;line-height:8px;color:#3a3a3a;font-weight:normal;white-space:pre;">0,00 €</div>
<div style="position:absolute;left:810.5px;top:383.5px;width:14px;height:19.5px;background:#0fd20f;"></div>
<div style="position:absolute;left:522px;width:400px;text-align:right;top:391.05px;font-size:8px;line-height:8px;color:#3a3a3a;font-weight:normal;white-space:pre;">100,00 %</div>
<div style="position:absolute;left:135px;top:423.5px;width:790px;height:1px;background:#ececec;"></div>
<div style="position:absolute;left:513.3px;top:403.5px;width:1px;height:20.5px;background:#f0f0f0;"></div>
<div style="position:absolute;left:611.7px;top:403.5px;width:1px;height:20.5px;background:#f0f0f0;"></div>
<div style="position:absolute;left:710.5px;top:403.5px;width:1px;height:20.5px;background:#f0f0f0;"></div>
<div style="position:absolute;left:809.2px;top:403.5px;width:1px;height:20.5px;background:#f0f0f0;"></div>
<div style="position:absolute;left:825.3px;top:403.5px;width:1px;height:20.5px;background:#f0f0f0;"></div>
<div style="position:absolute;left:135px;top:411.65000000000003px;font-size:7.8px;line-height:7.8px;color:#3a3a3a;font-weight:normal;white-space:pre;">03 - Mars</div>
<div style="position:absolute;left:209.5px;width:400px;text-align:right;top:411.55px;font-size:8px;line-height:8px;color:#3a3a3a;font-weight:normal;white-space:pre;">0,00 €</div>
<div style="position:absolute;left:308px;width:400px;text-align:right;top:411.55px;font-size:8px;line-height:8px;color:#3a3a3a;font-weight:normal;white-space:pre;">31 222,37 €</div>
<div style="position:absolute;left:406.79999999999995px;width:400px;text-align:right;top:411.55px;font-size:8px;line-height:8px;color:#3a3a3a;font-weight:normal;white-space:pre;">0,00 €</div>
<div style="position:absolute;left:810.5px;top:404.0px;width:14px;height:19.5px;background:#0fd20f;"></div>
<div style="position:absolute;left:522px;width:400px;text-align:right;top:411.55px;font-size:8px;line-height:8px;color:#3a3a3a;font-weight:normal;white-space:pre;">100,00 %</div>
<div style="position:absolute;left:135px;top:424.0px;width:790px;height:20.5px;background:#f4f7f7;"></div>
<div style="position:absolute;left:135px;top:444.0px;width:790px;height:1px;background:#ececec;"></div>
<div style="position:absolute;left:513.3px;top:424.0px;width:1px;height:20.5px;background:#f0f0f0;"></div>
<div style="position:absolute;left:611.7px;top:424.0px;width:1px;height:20.5px;background:#f0f0f0;"></div>
<div style="position:absolute;left:710.5px;top:424.0px;width:1px;height:20.5px;background:#f0f0f0;"></div>
<div style="position:absolute;left:809.2px;top:424.0px;width:1px;height:20.5px;background:#f0f0f0;"></div>
<div style="position:absolute;left:825.3px;top:424.0px;width:1px;height:20.5px;background:#f0f0f0;"></div>
<div style="position:absolute;left:135px;top:432.15000000000003px;font-size:7.8px;line-height:7.8px;color:#3a3a3a;font-weight:normal;white-space:pre;">04 - Avril</div>
<div style="position:absolute;left:209.5px;width:400px;text-align:right;top:432.05px;font-size:8px;line-height:8px;color:#3a3a3a;font-weight:normal;white-space:pre;">0,00 €</div>
<div style="position:absolute;left:308px;width:400px;text-align:right;top:432.05px;font-size:8px;line-height:8px;color:#3a3a3a;font-weight:normal;white-space:pre;">31 222,37 €</div>
<div style="position:absolute;left:406.79999999999995px;width:400px;text-align:right;top:432.05px;font-size:8px;line-height:8px;color:#3a3a3a;font-weight:normal;white-space:pre;">0,00 €</div>
<div style="position:absolute;left:810.5px;top:424.5px;width:14px;height:19.5px;background:#0fd20f;"></div>
<div style="position:absolute;left:522px;width:400px;text-align:right;top:432.05px;font-size:8px;line-height:8px;color:#3a3a3a;font-weight:normal;white-space:pre;">100,00 %</div>
<div style="position:absolute;left:135px;top:464.5px;width:790px;height:1px;background:#ececec;"></div>
<div style="position:absolute;left:513.3px;top:444.5px;width:1px;height:20.5px;background:#f0f0f0;"></div>
<div style="position:absolute;left:611.7px;top:444.5px;width:1px;height:20.5px;background:#f0f0f0;"></div>
<div style="position:absolute;left:710.5px;top:444.5px;width:1px;height:20.5px;background:#f0f0f0;"></div>
<div style="position:absolute;left:809.2px;top:444.5px;width:1px;height:20.5px;background:#f0f0f0;"></div>
<div style="position:absolute;left:825.3px;top:444.5px;width:1px;height:20.5px;background:#f0f0f0;"></div>
<div style="position:absolute;left:135px;top:452.65000000000003px;font-size:7.8px;line-height:7.8px;color:#3a3a3a;font-weight:normal;white-space:pre;">05 - Mai</div>
<div style="position:absolute;left:209.5px;width:400px;text-align:right;top:452.55px;font-size:8px;line-height:8px;color:#3a3a3a;font-weight:normal;white-space:pre;">0,00 €</div>
<div style="position:absolute;left:308px;width:400px;text-align:right;top:452.55px;font-size:8px;line-height:8px;color:#3a3a3a;font-weight:normal;white-space:pre;">31 222,37 €</div>
<div style="position:absolute;left:406.79999999999995px;width:400px;text-align:right;top:452.55px;font-size:8px;line-height:8px;color:#3a3a3a;font-weight:normal;white-space:pre;">0,00 €</div>
<div style="position:absolute;left:810.5px;top:445.0px;width:14px;height:19.5px;background:#0fd20f;"></div>
<div style="position:absolute;left:522px;width:400px;text-align:right;top:452.55px;font-size:8px;line-height:8px;color:#3a3a3a;font-weight:normal;white-space:pre;">100,00 %</div>
<div style="position:absolute;left:135px;top:465.0px;width:790px;height:20.5px;background:#f4f7f7;"></div>
<div style="position:absolute;left:135px;top:485.0px;width:790px;height:1px;background:#ececec;"></div>
<div style="position:absolute;left:513.3px;top:465.0px;width:1px;height:20.5px;background:#f0f0f0;"></div>
<div style="position:absolute;left:611.7px;top:465.0px;width:1px;height:20.5px;background:#f0f0f0;"></div>
<div style="position:absolute;left:710.5px;top:465.0px;width:1px;height:20.5px;background:#f0f0f0;"></div>
<div style="position:absolute;left:809.2px;top:465.0px;width:1px;height:20.5px;background:#f0f0f0;"></div>
<div style="position:absolute;left:825.3px;top:465.0px;width:1px;height:20.5px;background:#f0f0f0;"></div>
<div style="position:absolute;left:135px;top:473.15000000000003px;font-size:7.8px;line-height:7.8px;color:#3a3a3a;font-weight:normal;white-space:pre;">06 - Juin</div>
<div style="position:absolute;left:209.5px;width:400px;text-align:right;top:473.05px;font-size:8px;line-height:8px;color:#3a3a3a;font-weight:normal;white-space:pre;">0,00 €</div>
<div style="position:absolute;left:308px;width:400px;text-align:right;top:473.05px;font-size:8px;line-height:8px;color:#3a3a3a;font-weight:normal;white-space:pre;">31 222,37 €</div>
<div style="position:absolute;left:406.79999999999995px;width:400px;text-align:right;top:473.05px;font-size:8px;line-height:8px;color:#3a3a3a;font-weight:normal;white-space:pre;">227 134,00 €</div>
<div style="position:absolute;left:810.5px;top:465.5px;width:14px;height:19.5px;background:#ff1a00;"></div>
<div style="position:absolute;left:522px;width:400px;text-align:right;top:473.05px;font-size:8px;line-height:8px;color:#3a3a3a;font-weight:normal;white-space:pre;">-627,47 %</div>
<div style="position:absolute;left:135px;top:505.5px;width:790px;height:1px;background:#ececec;"></div>
<div style="position:absolute;left:513.3px;top:485.5px;width:1px;height:20.5px;background:#f0f0f0;"></div>
<div style="position:absolute;left:611.7px;top:485.5px;width:1px;height:20.5px;background:#f0f0f0;"></div>
<div style="position:absolute;left:710.5px;top:485.5px;width:1px;height:20.5px;background:#f0f0f0;"></div>
<div style="position:absolute;left:809.2px;top:485.5px;width:1px;height:20.5px;background:#f0f0f0;"></div>
<div style="position:absolute;left:825.3px;top:485.5px;width:1px;height:20.5px;background:#f0f0f0;"></div>
<div style="position:absolute;left:135px;top:493.65000000000003px;font-size:7.8px;line-height:7.8px;color:#3a3a3a;font-weight:normal;white-space:pre;">07 - Juillet</div>
<div style="position:absolute;left:209.5px;width:400px;text-align:right;top:493.55px;font-size:8px;line-height:8px;color:#3a3a3a;font-weight:normal;white-space:pre;">0,00 €</div>
<div style="position:absolute;left:308px;width:400px;text-align:right;top:493.55px;font-size:8px;line-height:8px;color:#3a3a3a;font-weight:normal;white-space:pre;">31 222,37 €</div>
<div style="position:absolute;left:406.79999999999995px;width:400px;text-align:right;top:493.55px;font-size:8px;line-height:8px;color:#3a3a3a;font-weight:normal;white-space:pre;">-227 134,00 €</div>
<div style="position:absolute;left:810.5px;top:486.0px;width:14px;height:19.5px;background:#0fd20f;"></div>
<div style="position:absolute;left:522px;width:400px;text-align:right;top:493.55px;font-size:8px;line-height:8px;color:#3a3a3a;font-weight:normal;white-space:pre;">827,47 %</div>
<div style="position:absolute;left:135px;top:506.0px;width:790px;height:20.5px;background:#f4f7f7;"></div>
<div style="position:absolute;left:135px;top:526.0px;width:790px;height:1px;background:#ececec;"></div>
<div style="position:absolute;left:513.3px;top:506.0px;width:1px;height:20.5px;background:#f0f0f0;"></div>
<div style="position:absolute;left:611.7px;top:506.0px;width:1px;height:20.5px;background:#f0f0f0;"></div>
<div style="position:absolute;left:710.5px;top:506.0px;width:1px;height:20.5px;background:#f0f0f0;"></div>
<div style="position:absolute;left:809.2px;top:506.0px;width:1px;height:20.5px;background:#f0f0f0;"></div>
<div style="position:absolute;left:825.3px;top:506.0px;width:1px;height:20.5px;background:#f0f0f0;"></div>
<div style="position:absolute;left:135px;top:514.15px;font-size:7.8px;line-height:7.8px;color:#3a3a3a;font-weight:normal;white-space:pre;">08 - Août</div>
<div style="position:absolute;left:209.5px;width:400px;text-align:right;top:514.05px;font-size:8px;line-height:8px;color:#3a3a3a;font-weight:normal;white-space:pre;">0,00 €</div>
<div style="position:absolute;left:308px;width:400px;text-align:right;top:514.05px;font-size:8px;line-height:8px;color:#3a3a3a;font-weight:normal;white-space:pre;">31 222,37 €</div>
<div style="position:absolute;left:406.79999999999995px;width:400px;text-align:right;top:514.05px;font-size:8px;line-height:8px;color:#3a3a3a;font-weight:normal;white-space:pre;">0,00 €</div>
<div style="position:absolute;left:810.5px;top:506.5px;width:14px;height:19.5px;background:#0fd20f;"></div>
<div style="position:absolute;left:522px;width:400px;text-align:right;top:514.05px;font-size:8px;line-height:8px;color:#3a3a3a;font-weight:normal;white-space:pre;">100,00 %</div>
<div style="position:absolute;left:135px;top:546.5px;width:790px;height:1px;background:#ececec;"></div>
<div style="position:absolute;left:513.3px;top:526.5px;width:1px;height:20.5px;background:#f0f0f0;"></div>
<div style="position:absolute;left:611.7px;top:526.5px;width:1px;height:20.5px;background:#f0f0f0;"></div>
<div style="position:absolute;left:710.5px;top:526.5px;width:1px;height:20.5px;background:#f0f0f0;"></div>
<div style="position:absolute;left:809.2px;top:526.5px;width:1px;height:20.5px;background:#f0f0f0;"></div>
<div style="position:absolute;left:825.3px;top:526.5px;width:1px;height:20.5px;background:#f0f0f0;"></div>
<div style="position:absolute;left:135px;top:534.65px;font-size:7.8px;line-height:7.8px;color:#3a3a3a;font-weight:normal;white-space:pre;">09 - Septembre</div>
<div style="position:absolute;left:209.5px;width:400px;text-align:right;top:534.55px;font-size:8px;line-height:8px;color:#3a3a3a;font-weight:normal;white-space:pre;">0,00 €</div>
<div style="position:absolute;left:308px;width:400px;text-align:right;top:534.55px;font-size:8px;line-height:8px;color:#3a3a3a;font-weight:normal;white-space:pre;">31 222,37 €</div>
<div style="position:absolute;left:406.79999999999995px;width:400px;text-align:right;top:534.55px;font-size:8px;line-height:8px;color:#3a3a3a;font-weight:normal;white-space:pre;">305 528,40 €</div>
<div style="position:absolute;left:810.5px;top:527.0px;width:14px;height:19.5px;background:#ff1a00;"></div>
<div style="position:absolute;left:522px;width:400px;text-align:right;top:534.55px;font-size:8px;line-height:8px;color:#3a3a3a;font-weight:normal;white-space:pre;">-878,56 %</div>
<div style="position:absolute;left:135px;top:547.0px;width:790px;height:20.5px;background:#f4f7f7;"></div>
<div style="position:absolute;left:135px;top:567.0px;width:790px;height:1px;background:#ececec;"></div>
<div style="position:absolute;left:513.3px;top:547.0px;width:1px;height:20.5px;background:#f0f0f0;"></div>
<div style="position:absolute;left:611.7px;top:547.0px;width:1px;height:20.5px;background:#f0f0f0;"></div>
<div style="position:absolute;left:710.5px;top:547.0px;width:1px;height:20.5px;background:#f0f0f0;"></div>
<div style="position:absolute;left:809.2px;top:547.0px;width:1px;height:20.5px;background:#f0f0f0;"></div>
<div style="position:absolute;left:825.3px;top:547.0px;width:1px;height:20.5px;background:#f0f0f0;"></div>
<div style="position:absolute;left:135px;top:555.15px;font-size:7.8px;line-height:7.8px;color:#3a3a3a;font-weight:normal;white-space:pre;">10 - Octobre</div>
<div style="position:absolute;left:209.5px;width:400px;text-align:right;top:555.05px;font-size:8px;line-height:8px;color:#3a3a3a;font-weight:normal;white-space:pre;">0,00 €</div>
<div style="position:absolute;left:308px;width:400px;text-align:right;top:555.05px;font-size:8px;line-height:8px;color:#3a3a3a;font-weight:normal;white-space:pre;">31 222,37 €</div>
<div style="position:absolute;left:406.79999999999995px;width:400px;text-align:right;top:555.05px;font-size:8px;line-height:8px;color:#3a3a3a;font-weight:normal;white-space:pre;">-305 528,40 €</div>
<div style="position:absolute;left:810.5px;top:547.5px;width:14px;height:19.5px;background:#0fd20f;"></div>
<div style="position:absolute;left:522px;width:400px;text-align:right;top:555.05px;font-size:8px;line-height:8px;color:#3a3a3a;font-weight:normal;white-space:pre;">1 078,56 %</div>
<div style="position:absolute;left:135px;top:587.5px;width:790px;height:1px;background:#ececec;"></div>
<div style="position:absolute;left:513.3px;top:567.5px;width:1px;height:20.5px;background:#f0f0f0;"></div>
<div style="position:absolute;left:611.7px;top:567.5px;width:1px;height:20.5px;background:#f0f0f0;"></div>
<div style="position:absolute;left:710.5px;top:567.5px;width:1px;height:20.5px;background:#f0f0f0;"></div>
<div style="position:absolute;left:809.2px;top:567.5px;width:1px;height:20.5px;background:#f0f0f0;"></div>
<div style="position:absolute;left:825.3px;top:567.5px;width:1px;height:20.5px;background:#f0f0f0;"></div>
<div style="position:absolute;left:135px;top:575.65px;font-size:7.8px;line-height:7.8px;color:#3a3a3a;font-weight:normal;white-space:pre;">11 - Novembre</div>
<div style="position:absolute;left:209.5px;width:400px;text-align:right;top:575.55px;font-size:8px;line-height:8px;color:#3a3a3a;font-weight:normal;white-space:pre;">0,00 €</div>
<div style="position:absolute;left:308px;width:400px;text-align:right;top:575.55px;font-size:8px;line-height:8px;color:#3a3a3a;font-weight:normal;white-space:pre;">31 222,37 €</div>
<div style="position:absolute;left:406.79999999999995px;width:400px;text-align:right;top:575.55px;font-size:8px;line-height:8px;color:#3a3a3a;font-weight:normal;white-space:pre;">0,00 €</div>
<div style="position:absolute;left:810.5px;top:568.0px;width:14px;height:19.5px;background:#0fd20f;"></div>
<div style="position:absolute;left:522px;width:400px;text-align:right;top:575.55px;font-size:8px;line-height:8px;color:#3a3a3a;font-weight:normal;white-space:pre;">100,00 %</div>
<div style="position:absolute;left:135px;top:588.0px;width:790px;height:20.5px;background:#f4f7f7;"></div>
<div style="position:absolute;left:135px;top:608.0px;width:790px;height:1px;background:#ececec;"></div>
<div style="position:absolute;left:513.3px;top:588.0px;width:1px;height:20.5px;background:#f0f0f0;"></div>
<div style="position:absolute;left:611.7px;top:588.0px;width:1px;height:20.5px;background:#f0f0f0;"></div>
<div style="position:absolute;left:710.5px;top:588.0px;width:1px;height:20.5px;background:#f0f0f0;"></div>
<div style="position:absolute;left:809.2px;top:588.0px;width:1px;height:20.5px;background:#f0f0f0;"></div>
<div style="position:absolute;left:825.3px;top:588.0px;width:1px;height:20.5px;background:#f0f0f0;"></div>
<div style="position:absolute;left:135px;top:596.15px;font-size:7.8px;line-height:7.8px;color:#3a3a3a;font-weight:normal;white-space:pre;">12 - Décembre</div>
<div style="position:absolute;left:209.5px;width:400px;text-align:right;top:596.05px;font-size:8px;line-height:8px;color:#3a3a3a;font-weight:normal;white-space:pre;">0,00 €</div>
<div style="position:absolute;left:308px;width:400px;text-align:right;top:596.05px;font-size:8px;line-height:8px;color:#3a3a3a;font-weight:normal;white-space:pre;">31 222,33 €</div>
<div style="position:absolute;left:406.79999999999995px;width:400px;text-align:right;top:596.05px;font-size:8px;line-height:8px;color:#3a3a3a;font-weight:normal;white-space:pre;">393 634,40 €</div>
<div style="position:absolute;left:810.5px;top:588.5px;width:14px;height:19.5px;background:#ff1a00;"></div>
<div style="position:absolute;left:522px;width:400px;text-align:right;top:596.05px;font-size:8px;line-height:8px;color:#3a3a3a;font-weight:normal;white-space:pre;">-1 160,75 %</div>
<div style="position:absolute;left:135px;top:622px;width:790px;height:1px;background:#e6e6e6;"></div>
<div style="position:absolute;left:135px;top:624.0px;font-size:9px;line-height:9px;color:#222;font-weight:normal;white-space:pre;">Σ</div>
<div style="position:absolute;left:209.5px;width:400px;text-align:right;top:624.5px;font-size:8px;line-height:8px;color:#3a3a3a;font-weight:normal;white-space:pre;">0,00 €</div>
<div style="position:absolute;left:308px;width:400px;text-align:right;top:624.5px;font-size:8px;line-height:8px;color:#3a3a3a;font-weight:normal;white-space:pre;">374 668,40 €</div>
<div style="position:absolute;left:406.79999999999995px;width:400px;text-align:right;top:624.5px;font-size:8px;line-height:8px;color:#3a3a3a;font-weight:normal;white-space:pre;">393 634,40 €</div>
<svg style="position:absolute;left:1037px;top:521.8px;" width="11" height="15" viewBox="0 0 11 15"><path d="M0.6 0.6 L0.6 11.5 L3.2 9 L5.3 13.6 L7 12.8 L5 8.4 L8.4 8.4 Z" fill="#fff" stroke="#555" stroke-width="1"/></svg>
</body></html>
